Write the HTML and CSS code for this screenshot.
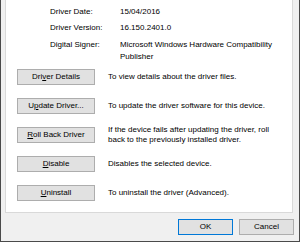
FILE: index.html
```html
<!DOCTYPE html>
<html>
<head>
<meta charset="utf-8">
<link rel="stylesheet" href="styles.css">
</head>
<body>
<div class="frame">
  <div class="panel">
    <div class="info">
      <div class="info-row r1"><span class="label">Driver Date:</span><span class="value">15/04/2016</span></div>
      <div class="info-row r2"><span class="label">Driver Version:</span><span class="value">16.150.2401.0</span></div>
      <div class="info-row r3"><span class="label">Digital Signer:</span><span class="value">Microsoft Windows Hardware Compatibility Publisher</span></div>
    </div>
    <div class="actions">
      <div class="action"><div class="btn">Dri<u>v</u>er Details</div><div class="desc">To view details about the driver files.</div></div>
      <div class="action"><div class="btn">U<u>p</u>date Driver...</div><div class="desc">To update the driver software for this device.</div></div>
      <div class="action"><div class="btn"><u>R</u>oll Back Driver</div><div class="desc">If the device fails after updating the driver, roll back to the previously installed driver.</div></div>
      <div class="action"><div class="btn"><u>D</u>isable</div><div class="desc">Disables the selected device.</div></div>
      <div class="action"><div class="btn"><u>U</u>ninstall</div><div class="desc">To uninstall the driver (Advanced).</div></div>
    </div>
  </div>
  <div class="footer">
    <div class="btn dlg default">OK</div>
    <div class="btn dlg">Cancel</div>
  </div>
</div>
</body>
</html>
```
FILE: styles.css
```css
html, body {
  margin: 0;
  padding: 0;
  background: #f0f0f0;
}
body {
  font-family: "Liberation Sans", Arial, sans-serif;
  font-size: 8px;
  color: #000;
}
.frame {
  box-sizing: border-box;
  width: 300px;
  height: 242px;
  border-left: 1px solid #4a4a4a;
  border-right: 1px solid #4a4a4a;
  border-bottom: 1px solid #4a4a4a;
  padding: 0 6px 0 4px;
  display: flex;
  flex-direction: column;
  overflow: hidden;
}
.panel {
  box-sizing: border-box;
  height: 213px;
  background: #fff;
  border: 1px solid #d9d9d9;
  border-top: none;
  display: flex;
  flex-direction: column;
}
.info {
  display: flex;
  flex-direction: column;
  padding: 6px 0 0 44px;
}
.info-row {
  display: flex;
  line-height: 12px;
}
.r2 { margin-top: 4px; }
.r3 { margin-top: 5px; }
.label {
  width: 70px;
  flex: none;
}
.value {
  width: 156px;
}
.actions {
  display: flex;
  flex-direction: column;
  gap: 13px;
  padding: 6px 0 0 11px;
}
.action {
  display: flex;
  align-items: center;
  gap: 13px;
  height: 16px;
}
.btn {
  box-sizing: border-box;
  width: 78px;
  height: 16px;
  flex: none;
  background: #e1e1e1;
  border: 1px solid #adadad;
  text-align: center;
  line-height: 14px;
  white-space: nowrap;
}
.btn u {
  text-decoration-thickness: 1px;
  text-underline-offset: 1px;
}
.desc {
  width: 162px;
  line-height: 10px;
}
.footer {
  display: flex;
  justify-content: flex-end;
  gap: 6px;
  margin-top: 6px;
  margin-right: -1px;
}
.dlg {
  width: 55px;
}
.default {
  border-color: #0078d7;
}
```
